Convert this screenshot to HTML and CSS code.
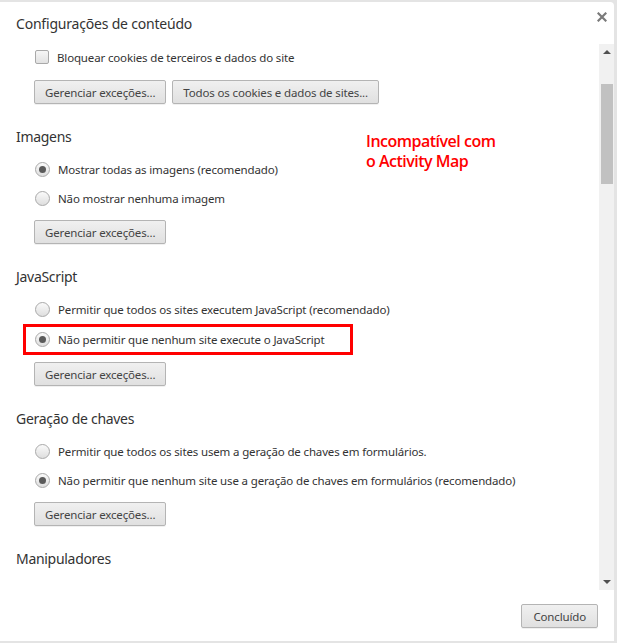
FILE: index.html
```html
<!DOCTYPE html>
<html lang="pt">
<head>
<meta charset="utf-8">
<title>Configurações de conteúdo</title>
<link rel="stylesheet" href="styles.css">
</head>
<body>
<div class="dialog">
  <div class="header">
    <h1 class="title">Configurações de conteúdo</h1>
    <button class="close" aria-label="Fechar">
      <svg width="10" height="10" viewBox="0 0 10 10"><path d="M1.5 1.5 L8.5 8.5 M8.5 1.5 L1.5 8.5" stroke="#7a7a7a" stroke-width="2.2" stroke-linecap="square"/></svg>
    </button>
  </div>
  <div class="body">
    <div class="content">
      <label class="row"><span class="checkbox"></span>Bloquear cookies de terceiros e dados do site</label>
      <div class="buttons">
        <button class="btn">Gerenciar exceções...</button>
        <button class="btn">Todos os cookies e dados de sites...</button>
      </div>

      <h2 class="section">Imagens</h2>
      <div class="options">
        <label class="row"><span class="radio checked"></span>Mostrar todas as imagens (recomendado)</label>
        <label class="row"><span class="radio"></span>Não mostrar nenhuma imagem</label>
      </div>
      <div class="buttons"><button class="btn">Gerenciar exceções...</button></div>

      <h2 class="section">JavaScript</h2>
      <div class="options">
        <label class="row"><span class="radio"></span>Permitir que todos os sites executem JavaScript (recomendado)</label>
        <label class="row highlight"><span class="radio checked"></span>Não permitir que nenhum site execute o JavaScript</label>
      </div>
      <div class="buttons"><button class="btn">Gerenciar exceções...</button></div>

      <h2 class="section">Geração de chaves</h2>
      <div class="options">
        <label class="row"><span class="radio"></span>Permitir que todos os sites usem a geração de chaves em formulários.</label>
        <label class="row"><span class="radio checked"></span>Não permitir que nenhum site use a geração de chaves em formulários (recomendado)</label>
      </div>
      <div class="buttons"><button class="btn">Gerenciar exceções...</button></div>

      <h2 class="section">Manipuladores</h2>

      <div class="note">Incompatível com<br>o Activity Map</div>
    </div>
    <div class="scrollbar">
      <span class="arrow up"></span>
      <div class="track"><div class="thumb"></div></div>
      <span class="arrow down"></span>
    </div>
  </div>
  <div class="footer">
    <button class="btn done">Concluído</button>
  </div>
</div>
</body>
</html>
```

FILE: styles.css
```css
* { box-sizing: border-box; }
html, body { margin: 0; padding: 0; }
body {
  background: #e4e4e4;
  width: 617px;
  height: 643px;
  overflow: hidden;
  font-family: "Noto Sans", "Open Sans", sans-serif;
  color: #333;
}
.dialog {
  margin-top: 2px;
  width: 614px;
  height: 639px;
  background: #fff;
  border-top-right-radius: 4px;
  display: flex;
  flex-direction: column;
}
.header {
  height: 42px;
  display: flex;
  justify-content: space-between;
  align-items: flex-start;
  flex: none;
}
.title {
  margin: 12px 0 0 16px;
  font-size: 14px;
  font-weight: 400;
  letter-spacing: -0.2px;
  line-height: 20px;
  color: #333;
}
.close {
  margin: 8px 5px 0 0;
  width: 14px;
  height: 14px;
  padding: 2px;
  border: 0;
  background: none;
  display: flex;
}
.body {
  flex: 1;
  display: flex;
  min-height: 0;
}
.content {
  flex: 1;
  position: relative;
  overflow: hidden;
  padding-left: 16px;
}
.row {
  display: flex;
  align-items: center;
  height: 29px;
  padding-left: 19px;
  font-size: 11.5px;
  letter-spacing: -0.15px;
  color: #333;
  white-space: nowrap;
}
.content > .row:first-child { height: 26px; }
.checkbox {
  width: 14px;
  height: 14px;
  border: 1px solid #a9a9a9;
  border-radius: 2px;
  background: linear-gradient(#f6f6f6, #e2e2e2);
  margin-right: 8px;
  flex: none;
}
.radio {
  width: 15px;
  height: 15px;
  border: 1px solid #a9a9a9;
  border-radius: 50%;
  background: linear-gradient(#fafafa, #dedede);
  margin-right: 8px;
  flex: none;
  display: flex;
  align-items: center;
  justify-content: center;
}
.radio.checked::after {
  content: "";
  width: 7px;
  height: 7px;
  border-radius: 50%;
  background: #5a5a5a;
}
.highlight {
  margin-left: 7px;
  padding-left: 9px;
  width: 330px;
  height: 31px;
  border: 3px solid #f00;
}
.options { margin-top: 8px; }
.buttons {
  display: flex;
  gap: 6px;
  margin-top: 7px;
  padding-left: 18px;
}
.content > .row:first-child + .buttons { margin-top: 10px; }
.btn {
  height: 24px;
  padding: 0 10px;
  border: 1px solid #b4b4b4;
  border-radius: 2px;
  background: linear-gradient(#f0f0f0, #e0e0e0);
  box-shadow: 0 1px 0 rgba(0,0,0,0.06);
  font-family: inherit;
  font-size: 11.5px;
  letter-spacing: -0.15px;
  color: #444;
  cursor: pointer;
}
.section {
  margin: 23px 0 0 0;
  font-size: 14px;
  font-weight: 400;
  letter-spacing: -0.3px;
  line-height: 20px;
  color: #333;
}
.note {
  position: absolute;
  left: 366px;
  top: 87px;
  font-family: "Open Sans", sans-serif;
  font-weight: 600;
  font-size: 16px;
  line-height: 20px;
  color: #f00;
  letter-spacing: -0.5px;
}
.scrollbar {
  width: 15px;
  background: #f1f1f1;
  display: flex;
  flex-direction: column;
  align-items: center;
}
.track { flex: 1; width: 100%; padding: 0 1px 0 2px; }
.thumb {
  margin-top: 24px;
  height: 100px;
  background: #c1c1c1;
}
.arrow {
  width: 0;
  height: 0;
  border-left: 4px solid transparent;
  border-right: 4px solid transparent;
  margin: 6px 0;
}
.arrow.up { border-bottom: 4px solid #505050; }
.arrow.down { border-top: 4px solid #505050; }
.footer {
  height: 51px;
  flex: none;
  display: flex;
  justify-content: flex-end;
  align-items: flex-start;
  padding: 14px 16px 0 0;
}
.done { padding: 0 11px; font-size: 11.5px; }
```
